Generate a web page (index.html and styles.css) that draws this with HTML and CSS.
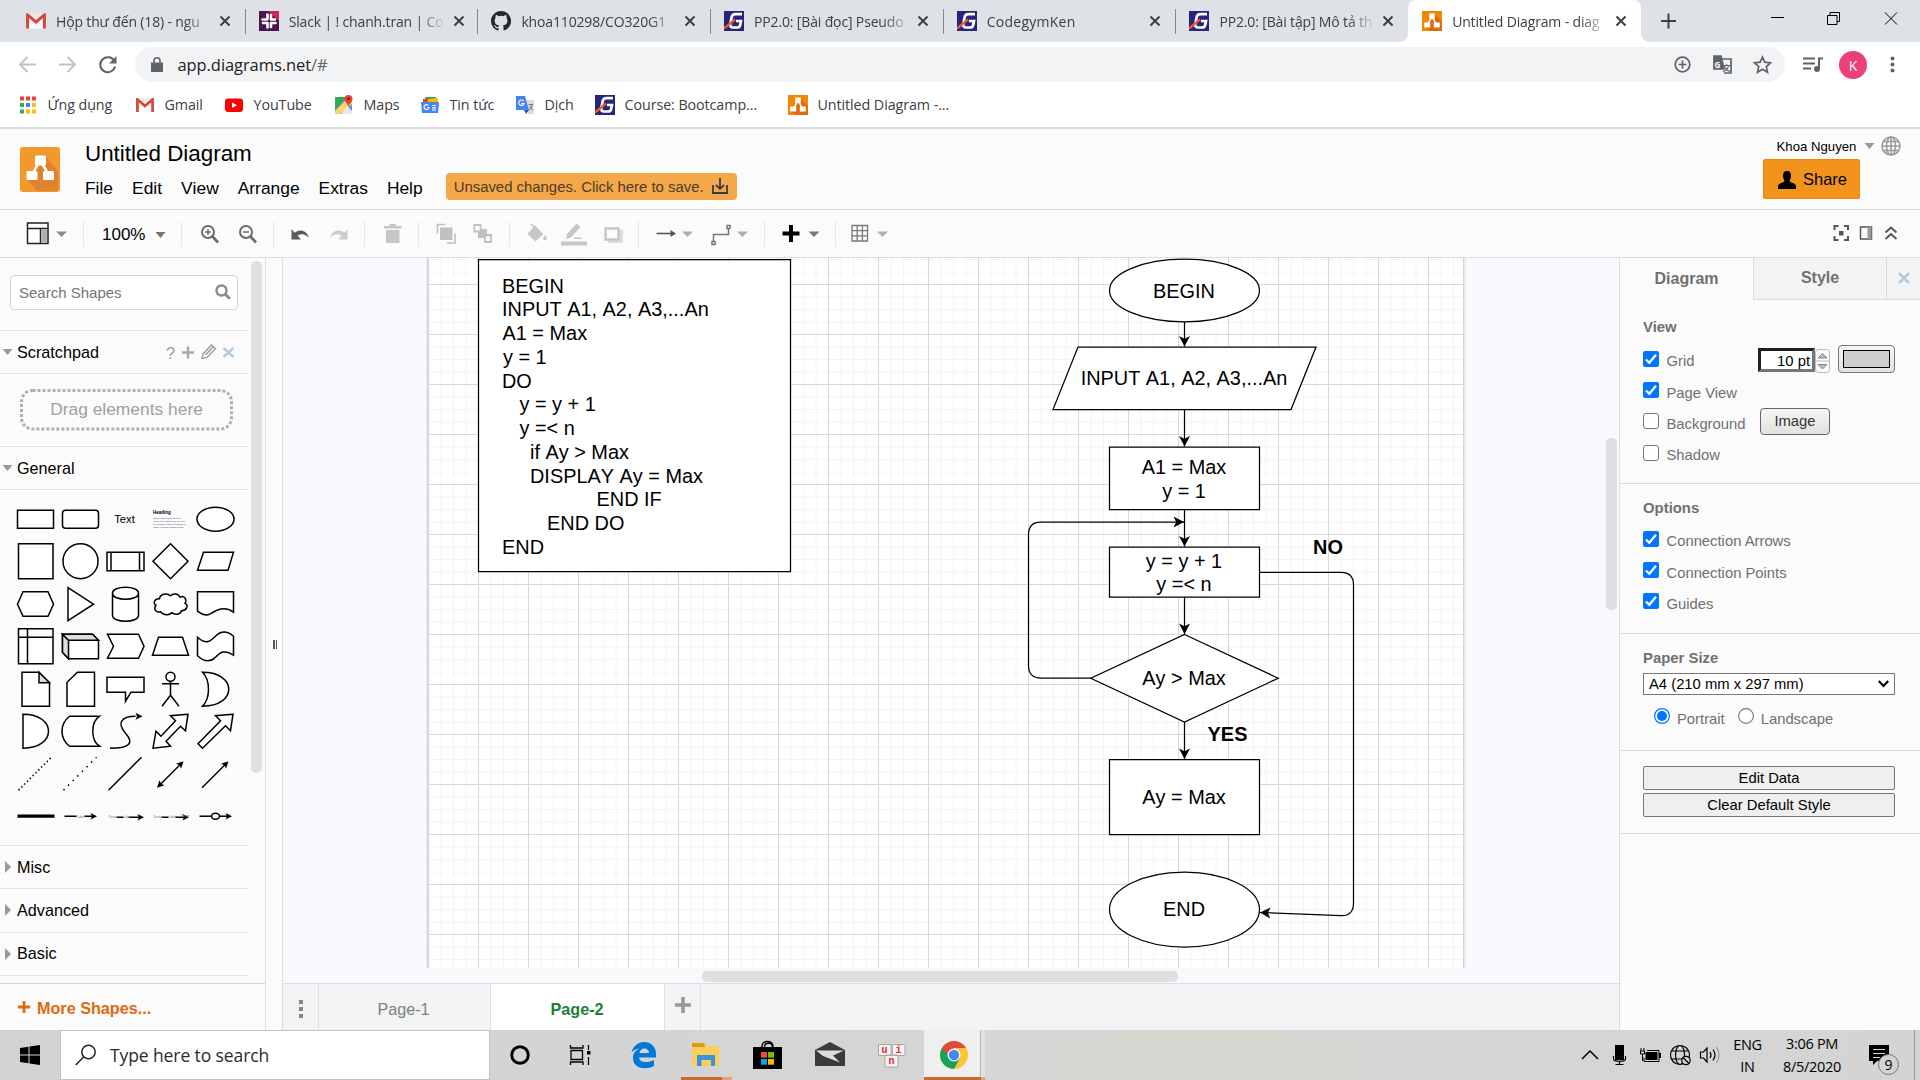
FILE: index.html
```html
<!DOCTYPE html>
<html lang="en">
<head>
<meta charset="utf-8">
<title>Untitled Diagram - diagrams.net</title>
<link rel="stylesheet" href="styles.css">
</head>
<body>
<svg class="defs" width="0" height="0">
  <defs>
    <symbol id="close" viewBox="0 0 12 12"><path d="M1.5 1.5l9 9M10.5 1.5l-9 9" stroke="#3c4043" stroke-width="2" fill="none"/></symbol>
    <symbol id="gmail" viewBox="0 0 18 14"><path d="M1 0h16v14H1z" fill="#eceaea"/><path d="M3 14V3l6 5 6-5v11z" fill="#f8f8f8"/><path d="M1.4 14V1.500L9 8l7.600-6.500V14" fill="none" stroke="#d6473c" stroke-width="2.700"/></symbol>
    <symbol id="gym" viewBox="0 0 20 20"><path d="M0 0h20v20H0z" fill="#25257b"/><path d="M18 3.200H11.500Q8.300 3.200 7.700 6L6.300 13Q5.800 16.500 9 16.500H13Q15.800 16.500 16.200 14L17 10H12" fill="none" stroke="#fff" stroke-width="2.700"/><path d="M0 17.500L11 8.500" stroke="#f1592a" stroke-width="2.300"/></symbol>
    <symbol id="drawio" viewBox="0 0 20 20"><path d="M0 0h20v20H0z" fill="#f08705"/><path d="M12 3l8 8v9H8l-5-4 6-6z" fill="#df6c0c"/><path d="M10 5L5.500 14M10 5l4.500 9" stroke="#fff" stroke-width="1.600"/><path d="M7.200 2.500h5.600v5.500H7.200zM2.200 11.500h6v5h-6zM11.800 11.500h6v5h-6z" fill="#fff"/></symbol>
    <symbol id="caret" viewBox="0 0 10 6"><path d="M0 0h10L5 6z" fill="currentColor"/></symbol>
    <symbol id="check" viewBox="0 0 16 16"><rect width="16" height="16" rx="2" fill="#0075ff"/><path d="M3 8.500l3.300 3.300L13 3.800" fill="none" stroke="#fff" stroke-width="2.300"/></symbol>
    <symbol id="uncheck" viewBox="0 0 16 16"><rect x=".5" y=".5" width="15" height="15" rx="2.500" fill="#fff" stroke="#767676"/></symbol>
  </defs>
</svg>

<div class="tabstrip">
  <div class="tab"><svg class="fav" viewBox="0 0 18 14"><use href="#gmail"/></svg><span class="tab-title">Hộp thư đến (18) - ngu</span><svg class="x"><use href="#close"/></svg></div>
  <div class="tab"><svg class="fav" viewBox="0 0 20 20"><path d="M0 0h20v20H0z" fill="#4a154b"/><path d="M9 0h11v10z" fill="#d0235a"/><g fill="none" stroke="#fff" stroke-width="2.600" stroke-linecap="round"><path d="M8.500 3.500V8M3.500 8.500H8M12 4v4M12 8.500h4M8.500 12v4.500M4 12h4M12 12v4M12 12h4.500"/></g></svg><span class="tab-title">Slack | ! chanh.tran | Co</span><svg class="x"><use href="#close"/></svg></div>
  <div class="tab"><svg class="fav" viewBox="0 0 16 16"><path fill="#24292e" d="M8 0C3.580 0 0 3.580 0 8c0 3.540 2.290 6.530 5.470 7.590.4.070.55-.17.55-.38v-1.490c-2.010.37-2.530-.49-2.690-.94-.09-.23-.48-.94-.82-1.130-.28-.15-.68-.52-.01-.53.63-.01 1.080.58 1.230.82.72 1.210 1.870.87 2.330.66.07-.52.28-.87.51-1.070-1.780-.2-3.640-.89-3.640-3.950 0-.87.31-1.590.82-2.150-.08-.2-.36-1.020.08-2.120 0 0 .67-.21 2.200.82a7.400 7.400 0 014 0c1.530-1.040 2.200-.82 2.200-.82.44 1.100.16 1.920.08 2.120.51.56.82 1.270.82 2.150 0 3.070-1.870 3.750-3.650 3.950.29.25.54.73.54 1.480v2.200c0 .21.15.46.55.38A8 8 0 008 0z"/></svg><span class="tab-title">khoa110298/CO320G1</span><svg class="x"><use href="#close"/></svg></div>
  <div class="tab"><svg class="fav"><use href="#gym"/></svg><span class="tab-title">PP2.0: [Bài đọc] Pseudo</span><svg class="x"><use href="#close"/></svg></div>
  <div class="tab"><svg class="fav"><use href="#gym"/></svg><span class="tab-title wide">CodegymKen</span><svg class="x"><use href="#close"/></svg></div>
  <div class="tab no-sep"><svg class="fav"><use href="#gym"/></svg><span class="tab-title">PP2.0: [Bài tập] Mô tả th</span><svg class="x"><use href="#close"/></svg></div>
  <div class="tab active"><svg class="fav"><use href="#drawio"/></svg><span class="tab-title">Untitled Diagram - diag</span><svg class="x"><use href="#close"/></svg></div>
  <svg class="wincontrols" width="279" height="42" viewBox="1641 0 279 42" fill="none"><path d="M1661 21h15M1668.500 13.500v15" stroke="#3c4043" stroke-width="2"/><path d="M1771 17.500h13" stroke="#000"/><path d="M1827.500 15.500h9.500v9h-9.500zM1830 15.500v-3h9.500v9H1837M1885 12.500l12 12M1897 12.500l-12 12" stroke="#000"/></svg>
</div>

<div class="navbar">
  <svg class="nav-icons" width="135" height="44" viewBox="0 42 135 44" fill="none"><path d="M36 64.500H20M27.500 57l-7.500 7.500 7.500 7.500M59 64.500h16M67.500 57l7.500 7.500-7.500 7.500" stroke="#bdc1c6" stroke-width="1.800"/><path d="M114.500 61.500a7.500 7.500 0 1 0 .5 5" stroke="#5f6368" stroke-width="2"/><path d="M116.500 56v7.500H109z" fill="#5f6368"/></svg>
  <div class="omnibox">
    <svg width="12" height="15" viewBox="0 0 12 15"><path d="M0 5.500h12V15H0z" fill="#5f6368"/><path d="M3 6V3.800a3 3 0 0 1 6 0V6" fill="none" stroke="#5f6368" stroke-width="1.600"/></svg>
    <span class="url">app.diagrams.net<i>/#</i></span>
    <svg width="103" height="30" viewBox="1672 50 103 30" fill="none" stroke="#5f6368" stroke-width="1.700"><circle cx="1682.500" cy="64.500" r="7.300"/><path d="M1678.500 64.500h8M1682.500 60.500v8"/><path d="M1714 56h7l3 13h-10z" fill="#5f6368"/><path d="M1722 59h9v14h-7"/><text x="1714.500" y="67.500" class="tiny" fill="#fff" stroke="none">G</text><text x="1722.500" y="70.500" class="tiny" fill="#5f6368" stroke="none">文</text><path d="M1762.500 57l2.300 5.200 5.700.6-4.200 3.800 1.200 5.600-5-2.900-5 2.900 1.200-5.600-4.200-3.800 5.700-.6z"/></svg>
  </div>
  <svg width="135" height="44" viewBox="1785 42 135 44"><path d="M1803 58.500h12M1803 63.500h12M1803 68.500h8" stroke="#5f6368" stroke-width="2"/><circle cx="1817" cy="69" r="3" fill="#5f6368"/><path d="M1819 69V58.500h4" stroke="#5f6368" stroke-width="2" fill="none"/><circle cx="1853" cy="65" r="14" fill="#ec407a"/><text x="1853" y="70.500" text-anchor="middle" class="avatar">K</text><g fill="#5f6368"><circle cx="1892.500" cy="58.500" r="2"/><circle cx="1892.500" cy="64.500" r="2"/><circle cx="1892.500" cy="70.500" r="2"/></g></svg>
</div>

<div class="bookmarks">
  <a class="bm bm-apps"><svg viewBox="0 0 20 20"><g transform="translate(2 1.500)"><path d="M0 0h4v4H0zM6 0h4v4H6zM12 0h4v4h-4z" fill="#ea4335"/><path d="M0 6.500h4v4H0z" fill="#34a853"/><path d="M6 6.500h4v4H6z" fill="#4285f4"/><path d="M12 6.500h4v4h-4zM6 13h4v4H6zM12 13h4v4h-4z" fill="#fbbc05"/><path d="M0 13h4v4H0z" fill="#34a853"/></g></svg>Ứng dụng</a>
  <a class="bm bm-gmail"><svg viewBox="-1 0 20 14"><use href="#gmail" width="18" height="14"/></svg>Gmail</a>
  <a class="bm bm-yt"><svg viewBox="0 0 20 20"><rect x="1" y="3.500" width="18" height="13.500" rx="3" fill="#f00"/><path d="M8 7.500l5 2.800-5 2.800z" fill="#fff"/></svg>YouTube</a>
  <a class="bm bm-maps"><svg viewBox="0 0 20 20"><path d="M1 2h17v17H1z" fill="#5d93f5"/><path d="M1 2h12L1 15z" fill="#34a853"/><path d="M1 16L14 3l4 3v3L6 19H1z" fill="#fdd663"/><path d="M7 19l6-8 5 5v3z" fill="#e8eaed"/><path d="M14.500 0a4 4 0 0 1 4 4c0 3-3 4-4 8-1-4-4-5-4-8a4 4 0 0 1 4-4z" fill="#ea4335"/><circle cx="14.500" cy="4" r="1.400" fill="#8c2018"/></svg>Maps</a>
  <a class="bm bm-news"><svg viewBox="0 0 20 20"><path d="M5 2h11v5H5z" fill="#34a853"/><path d="M3 4h9v4H3z" fill="#ea4335"/><path d="M8 4l10-1v5H8z" fill="#fbbc05"/><path d="M1 7h18l-1 11H2z" fill="#4285f4"/><path d="M8.500 10.500a2.500 2.500 0 1 0 .5 2H7M12 10.500h4M12 12.800h4M12 15h4" stroke="#fff" stroke-width="1.200" fill="none"/></svg>Tin tức</a>
  <a class="bm bm-dich"><svg viewBox="0 0 20 20"><path d="M9 5h10v14h-6z" fill="#dcdcdc"/><path d="M1 1h9l4 14H1z" fill="#4285f4"/><path d="M9 15h5l-3 4z" fill="#1a56c4"/><path d="M8.500 6a2.700 2.700 0 1 0 .5 2.500H6.500" stroke="#fff" stroke-width="1.200" fill="none"/><path d="M13.500 9.500h4.500M17 10c-.5 3-2 4-3 5M14.500 11l3 4" stroke="#777" fill="none"/></svg>Dịch</a>
  <a class="bm bm-course"><svg><use href="#gym"/></svg>Course: Bootcamp...</a>
  <a class="bm"><svg><use href="#drawio"/></svg>Untitled Diagram -...</a>
</div>

<header class="header">
  <svg class="logo" viewBox="0 0 40 45"><rect width="40" height="45" rx="3" fill="#f2982c"/><path d="M25 9l13 15v17a3 3 0 0 1-3 3H17L7 32l12-14z" fill="#e08330"/><path d="M20 13L12 28M20 13l9 15" stroke="#fff" stroke-width="2.500"/><g fill="#fff"><rect x="15" y="8.500" width="11" height="10" rx="1.500"/><rect x="6.500" y="24" width="11" height="9" rx="1.500"/><rect x="23" y="24" width="11" height="9" rx="1.500"/></g></svg>
  <div class="title-block">
    <div class="doc-title">Untitled Diagram</div>
    <nav class="menus"><a>File</a><a>Edit</a><a>View</a><a>Arrange</a><a>Extras</a><a>Help</a>
      <div class="unsaved"><span>Unsaved changes. Click here to save.</span><svg width="16" height="16" viewBox="0 0 16 16" fill="none" stroke="#3c3c3c" stroke-width="1.800"><path d="M1 7v8h14V7M8 0v11M4 7l4 4 4-4"/></svg></div>
    </nav>
  </div>
  <div class="account">
    <div class="user"><span>Khoa Nguyen</span><svg class="caret" width="11" height="6"><use href="#caret"/></svg><svg width="20" height="20" viewBox="0 0 20 20" fill="none" stroke="#999" stroke-width="1.500"><circle cx="10" cy="10" r="9"/><ellipse cx="10" cy="10" rx="4.500" ry="9"/><path d="M10 1v18M1 10h18M2.500 5.500h15M2.500 14.500h15"/></svg></div>
    <button class="share"><svg width="18" height="18" viewBox="0 0 18 18"><path d="M9 0c3 0 4 2 4 4.500S12 9 11.500 10c0 1.500 6.500 2 6.500 5v3H0v-3c0-3 6.500-3.500 6.500-5C6 9 5 7 5 4.500S6 0 9 0z"/></svg><span>Share</span></button>
  </div>
</header>

<div class="toolbar">
  <svg class="tg" width="84" height="46" viewBox="0 210 84 46"><path d="M27.500 223h20.500v20.500H27.500zM27 228.500h21M40.500 228v15" fill="#fff" stroke="#222" stroke-width="1.500"/><path d="M41.500 229.500h5.500v13h-5.500z" fill="#b0b0b0"/><path d="M56 231.500h11l-5.500 5.500z" fill="#8a8a8a"/></svg>
  <div class="tg zoom"><span>100%</span><svg class="caret" width="11" height="6"><use href="#caret"/></svg></div>
  <svg class="tg" width="92" height="46" viewBox="182 210 92 46" fill="none" stroke="#6b6b6b" stroke-width="2"><circle cx="208" cy="232" r="6"/><path d="M212.500 236.500l5.500 6" stroke-width="2.600"/><path d="M205 232h6M208 229v6" stroke-width="1.500"/><circle cx="246" cy="232" r="6"/><path d="M250.500 236.500l5.500 6" stroke-width="2.600"/><path d="M243 232h6" stroke-width="1.500"/></svg>
  <svg class="tg" width="91" height="46" viewBox="274 210 91 46"><path d="M291.500 229v10.500h9.500l-3.500-3.800c4-2.500 8-1.500 11.500 2-2.500-7.200-9-9-14.300-5z" fill="#5c5c5c"/><path d="M347.500 229v10.500H338l3.500-3.800c-4-2.500-8-1.500-11.500 2 2.500-7.200 9-9 14.300-5z" fill="#ccc"/></svg>
  <svg class="tg" width="54" height="46" viewBox="365 210 54 46" fill="#c6c6c6"><path d="M384 226h5.500v-2h6.500v2h5.500v2.500H384zM386 230h13.500v13H386z"/></svg>
  <svg class="tg" width="91" height="46" viewBox="419 210 91 46"><g fill="#c0c0c0"><path d="M440 227.500h12.500V240H440zM473.500 224h8v8.500h-8zM484 234h8v9h-8z"/><path d="M478 229h9v9h-9z"/></g><path d="M437.500 233.500v-9h8M447 243h8v-9.500" fill="none" stroke="#c0c0c0" stroke-width="1.600"/><path d="M475.300 226h4.500v4.500h-4.500zM485.700 236.500h4.500v4.500h-4.500z" fill="#fbfbfb"/></svg>
  <svg class="tg" width="129" height="46" viewBox="510 210 129 46" fill="#c6c6c6"><path d="M535 225.500l8.500 8.500-8 7.500-8-7.500zM545 235c3 4 2 5 0 5s-3-1 0-5z"/><path d="M531 224l5 5" stroke="#c6c6c6" stroke-width="1.700"/><path d="M561 241.500h26v4h-26zM566 239l1-5 9.500-10.500 4 3.500-9.500 10.500zM574 237.500h8v1.500h-8z"/><path d="M608 230v13h15v-13z" fill="#ddd"/><path d="M605.500 228.500h13v11h-13z" fill="#fbfbfb" stroke="#c6c6c6" stroke-width="2.400"/></svg>
  <svg class="tg" width="126" height="46" viewBox="639 210 126 46"><path d="M656.500 233.500h17" stroke="#555" stroke-width="1.600"/><path d="M670.500 230l5.500 3.500-5.500 3.500z" fill="#555"/><path d="M713.500 241v-6.500h15V229" fill="none" stroke="#777" stroke-width="1.500"/><path d="M712 241.500h3v3h-3zM727 225.500h3v3h-3z" fill="#fff" stroke="#777" stroke-width="1.500"/><path d="M682 231.500h11l-5.500 5.500zM737 231.500h11l-5.500 5.500z" fill="#b0b0b0"/></svg>
  <svg class="tg" width="71" height="46" viewBox="765 210 71 46"><path d="M782.500 233.500h17M791 225v17" stroke="#000" stroke-width="4"/><path d="M808.500 231.500h11l-5.500 5.500z" fill="#777"/></svg>
  <svg class="tg last" width="70" height="46" viewBox="836 210 70 46"><path d="M852 225.500h15.500v15.500H852zM857.200 225.500v15.500M862.400 225.500v15.500M852 230.700h15.500M852 235.900h15.500" fill="none" stroke="#777" stroke-width="1.300"/><path d="M877 231.500h11l-5.500 5.500z" fill="#b0b0b0"/></svg>
  <svg class="view-controls" width="90" height="46" viewBox="1830 210 90 46" fill="none" stroke="#555" stroke-width="2"><path d="M1834.500 230v-4h4M1844 226h4v4M1848 236v4h-4M1838.500 240h-4v-4"/><path d="M1839 231h4.500v4.500h-4.500z" fill="#555" stroke="none"/><path d="M1860.500 227h11v12h-11z" stroke-width="1.500"/><path d="M1867.500 227h4v12h-4z" fill="#999" stroke="none"/><path d="M1885.500 232.500l5.500-5 5.500 5M1885.500 239l5.500-5 5.500 5"/></svg>
</div>

<main class="workspace">
  <aside class="sidebar">
    <div class="side-scroll">
      <div class="side-content">
        <div class="search-wrap"><div class="search"><span>Search Shapes</span><svg width="16" height="16" viewBox="0 0 16 16" fill="none" stroke="#8c8c8c"><circle cx="6.500" cy="6.500" r="5" stroke-width="2.400"/><path d="M10 10l4.800 4.800" stroke-width="3"/></svg></div></div>
        <div class="section open"><svg width="11" height="6"><use href="#caret"/></svg><span>Scratchpad</span>
          <svg class="scratch-tools" width="70" height="18" viewBox="165 343 70 18"><text x="166" y="358.500" class="question">?</text><path d="M182 352.500h12M188 346.500v12" stroke="#aaa" stroke-width="2.500"/><path d="M203 354l8.500-9 4 3.500-8.500 9-5 1zM205.500 355l7.500-8" fill="none" stroke="#999" stroke-width="1.300"/><path d="M223.500 348l10 9M233.500 348l-10 9" stroke="#b6c8dc" stroke-width="2.400"/></svg>
        </div>
        <div class="drop-wrap"><svg width="213" height="42" viewBox="0 0 213 42"><rect x="1.500" y="1.500" width="210" height="38.500" rx="11" fill="none" stroke="#b0b0b0" stroke-width="3" stroke-dasharray="3 2"/><text x="106.500" y="26" text-anchor="middle" class="drop-text">Drag elements here</text></svg></div>
        <div class="section open top"><svg width="11" height="6"><use href="#caret"/></svg><span>General</span></div>
        <div class="palette">
          <svg viewBox="-22.500 -21 45 42"><path d="M-18-9h36V9h-36z"/></svg>
          <svg viewBox="-22.500 -21 45 42"><rect x="-18" y="-9" width="36" height="18" rx="3"/></svg>
          <svg viewBox="-22.500 -21 45 42"><text x="-1" y="4" text-anchor="middle" class="pal-text">Text</text></svg>
          <svg viewBox="-22.500 -21 45 42"><text x="-17.500" y="-5.500" class="pal-head">Heading</text><g class="pal-lorem"><text x="-17.500" y="-.5">Lorem ipsum dolor sit amet,</text><text x="-17.500" y="2.500">consectetur adipisicing elit, sed</text><text x="-17.500" y="5.500">do eiusmod tempor incididunt ut</text><text x="-17.500" y="8.500">labore et dolore magna aliqua</text></g></svg>
          <svg viewBox="-22.500 -21 45 42"><ellipse rx="18.500" ry="12"/></svg>

          <svg viewBox="-22.500 -21 45 42"><path d="M-17-17.500h34.500v35h-34.500z"/></svg>
          <svg viewBox="-22.500 -21 45 42"><circle r="17.500"/></svg>
          <svg viewBox="-22.500 -21 45 42"><path d="M-18.500-9h37V9.500h-37zM-14.500-9V9.500M14-9V9.500"/></svg>
          <svg viewBox="-22.500 -21 45 42"><path d="M0-17.500L17.500 0 0 17.500-17.500 0z"/></svg>
          <svg viewBox="-22.500 -21 45 42"><path d="M-12-9h30L12.500 9h-30.500z"/></svg>

          <svg viewBox="-22.500 -21 45 42"><path d="M-12.500-12.500h25L18 0l-5.500 12h-25L-18 0z"/></svg>
          <svg viewBox="-22.500 -21 45 42"><path d="M-12.500-16.500L13 0l-25.500 16.500z"/></svg>
          <svg viewBox="-22.500 -21 45 42"><path d="M-13-11v22c0 8 26 8 26 0v-22c0-8-26-8-26 0c0 8 26 8 26 0"/></svg>
          <svg viewBox="-22.500 -21 45 42"><path d="M-11-5.500c-5-.5-7 5-3.500 6.500-3 3.500 0 8 4.500 6.500 2 3.500 9 4 11 1 4 3 9.500 1.500 10-2 5 0 7.500-5 3.500-7.500 2.500-4-1-8-5-6-2-4-7-4-9.500-1.500-4-3.500-10.500-1.500-11 3z"/></svg>
          <svg viewBox="-22.500 -21 45 42"><path d="M-18-12.500h36V8C9 1 1 6-6 10c-4 2-8 0-12-3z"/></svg>

          <svg viewBox="-22.500 -21 45 42"><path d="M-17-17.500h34.500v35h-34.500zM-17-9h34.500M-8-17.500v35"/></svg>
          <svg viewBox="-22.500 -21 45 42"><path d="M-18-12h30L18-6v18.500h-30L-18 6z"/><path d="M-18-12l6 6v18.500L-18 6z" class="shade"/><path d="M-18-12h30L18-6h-30z" class="shade"/></svg>
          <svg viewBox="-22.500 -21 45 42"><path d="M-18-12h31L18.500 0 13 12h-31l6-12z"/></svg>
          <svg viewBox="-22.500 -21 45 42"><path d="M-12-9h24l6 18h-36z"/></svg>
          <svg viewBox="-22.500 -21 45 42"><path d="M-18-9C-9-1-5-5 0-10s11-6 18 0V9C9 3 5 6 0 11s-11 5-18-1.500z"/></svg>

          <svg viewBox="-22.500 -21 45 42"><path d="M-13.500-17h17L14-6.500V17h-27.500z"/><path d="M3.500-17v10.500H14z" class="shade"/></svg>
          <svg viewBox="-22.500 -21 45 42"><path d="M-3-17h17V17h-27.500V-7z"/></svg>
          <svg viewBox="-22.500 -21 45 42"><path d="M-18.500-12h37V3H5.500L0 12V3h-18.500z"/></svg>
          <svg viewBox="-22.500 -21 45 42"><circle cy="-12.500" r="4.500"/><path d="M0-8V6M-8.500-5.500h17M0 6l-8.500 11M0 6l8.500 11"/></svg>
          <svg viewBox="-22.500 -21 45 42"><path d="M-13-17c35 0 35 34 0 34 8-8 8-26 0-34z"/></svg>

          <svg viewBox="-22.500 -21 45 42"><path d="M-12.500-17c34 0 34 34 0 34z"/></svg>
          <svg viewBox="-22.500 -21 45 42"><path d="M-11-15h30c-9 6-9 24 0 30h-30c-10-8-10-22 0-30z"/></svg>
          <svg viewBox="-22.500 -21 45 42"><path d="M-15.500 17C4 17 9 12 0 2S-4-15 10-15" fill="none"/><path d="M17-15l-7-3.500 1.500 3.500L10-11.500z" class="solid"/></svg>
          <svg viewBox="-22.500 -21 45 42"><path d="M17.500-17L0-15.500l5 5L-9.500 5l-5-5-3 17L0 15l-4.500-5L10-5l5 4.500z"/></svg>
          <svg viewBox="-22.500 -21 45 42"><path d="M17.500-17L0-15.500l5 5L-17.500 12.500l4.500 4.500L10-5.500l5 5z"/></svg>

          <svg viewBox="-22.500 -21 45 42"><path d="M-17 16L16-17" stroke-dasharray="1.500 2.500"/></svg>
          <svg viewBox="-22.500 -21 45 42"><path d="M-17 16L16-17" stroke-dasharray="1.500 5"/></svg>
          <svg viewBox="-22.500 -21 45 42"><path d="M-17 16L16-17"/></svg>
          <svg viewBox="-22.500 -21 45 42"><path d="M-11 11L11-11"/><path d="M13-13L5.500-10.500 9-9l1.500 3.500zM-13.500 13.500L-11 6l1.500 3.500 3.500 1.500z" class="solid"/></svg>
          <svg viewBox="-22.500 -21 45 42"><path d="M-13.500 13.500L11-11"/><path d="M13-13L5.500-10.500 9-9l1.500 3.500z" class="solid"/></svg>

          <svg viewBox="-22.500 -21 45 42"><path d="M-18 0h37" stroke-width="3.200"/></svg>
          <svg viewBox="-22.500 -21 45 42"><path d="M-16 0h12M4 0h8"/><path d="M16.500 0L10-3.200 11.500 0 10 3.200z" class="solid"/><text x="-3.500" y="1.300" class="pal-label">Label</text></svg>
          <svg viewBox="-22.500 -21 45 42"><path d="M-9 1h7M3 1h12"/><path d="M18.500 1L12-2.200 13.500 1 12 4.200z" class="solid"/><text x="-17" y="1.500" class="pal-label">Source</text><text x="-2" y="1.500" class="pal-label">Label</text></svg>
          <svg viewBox="-22.500 -21 45 42"><path d="M-9 1h7M5 1h10"/><path d="M18.500 1L12-2.200 13.500 1 12 4.200z" class="solid"/><text x="-17" y="1.500" class="pal-label">Source</text><text x="-2" y="1.500" class="pal-label">Label</text><text x="10" y="1" class="pal-label">Target</text></svg>
          <svg viewBox="-22.500 -21 45 42"><path d="M-16 0h28"/><ellipse cx="0" cy="0" rx="4" ry="3"/><path d="M16.500 0L10-3.200 11.500 0 10 3.200z" class="solid"/></svg>
        </div>
        <div class="section closed top"><svg width="6" height="12" viewBox="0 0 6 12"><path d="M0 0l6 6-6 6z" fill="#999"/></svg><span>Misc</span></div>
        <div class="section closed"><svg width="6" height="12" viewBox="0 0 6 12"><path d="M0 0l6 6-6 6z" fill="#999"/></svg><span>Advanced</span></div>
        <div class="section closed"><svg width="6" height="12" viewBox="0 0 6 12"><path d="M0 0l6 6-6 6z" fill="#999"/></svg><span>Basic</span></div>
      </div>
      <div class="side-bar"></div>
    </div>
    <div class="more-shapes"><svg width="12" height="12" viewBox="0 0 12 12"><path d="M0 6h12M6 0v12" stroke="#dd6b10" stroke-width="2.800"/></svg>More Shapes...</div>
  </aside>
  <div class="splitter"><i></i><i></i></div>

  <section class="center">
    <div class="canvas-row">
      <svg class="canvas" width="1336" height="710" viewBox="283 258 1336 710">
        <defs>
          <pattern id="grid" x="428" y="284" width="50" height="50" patternUnits="userSpaceOnUse"><path d="M13 0v50M25.500 0v50M38 0v50M0 13h50M0 25.500h50M0 38h50" stroke="#f4f4f4" fill="none"/><path d="M.5 0v50M0 .5h50" stroke="#d8d8d8" fill="none"/></pattern>
          <marker id="arrow" viewBox="-11 -6 12 12" refX="0" refY="0" markerWidth="12" markerHeight="12" markerUnits="userSpaceOnUse" orient="auto"><path d="M0 0l-10.500-5.500 2.700 5.500-2.700 5.500z"/></marker>
        </defs>
        <path d="M426 258h1040v710H426z" fill="#ececef"/>
        <path d="M428 258h1036v710H428z" fill="#fff"/>
        <path d="M428 258h1036v710H428z" fill="url(#grid)"/>
        <path d="M1463.500 258v710M427.500 258v710" stroke="#d5d5d8"/>
        <g class="shape">
          <path d="M478.500 259.500h312v312h-312z"/>
          <ellipse cx="1184.500" cy="290.500" rx="75" ry="31.300"/>
          <path d="M1078 347h238l-25 62.500h-238z"/>
          <path d="M1109.500 447h150v62.500h-150z"/>
          <path d="M1109.500 547h150v50h-150z"/>
          <path d="M1184.500 634.500l93.700 43.700-93.700 43.800-93.700-43.800z"/>
          <path d="M1109.500 759.500h150v75h-150z"/>
          <ellipse cx="1184.500" cy="909.500" rx="75" ry="37.500"/>
        </g>
        <g class="edge">
          <path d="M1184.500 322v24.500"/><path d="M1184.500 409.500v37"/><path d="M1184.500 509.500v37"/><path d="M1184.500 597v37"/><path d="M1184.500 722v37"/>
          <path d="M1091 678h-50q-12.500 0-12.500-12.500V534.500q0-12.500 12.500-12.500h143"/>
          <path d="M1259.500 572.300h81.500q12.500 0 12.500 12.500v318.200q0 13-12.500 12.700l-81-3.200"/>
        </g>
        <g class="code">
          <text x="502" y="292.500">BEGIN</text><text x="502" y="316">INPUT A1, A2, A3,...An</text><text x="502.500" y="340">A1 = Max</text><text x="503" y="364">y = 1</text><text x="502" y="387.500">DO</text><text x="519.500" y="411">y = y + 1</text><text x="519.500" y="435">y =&lt; n</text><text x="530" y="459">if Ay &gt; Max</text><text x="530" y="483">DISPLAY Ay = Max</text><text x="596.500" y="505.500">END IF</text><text x="547" y="529.500">END DO</text><text x="502" y="553.500">END</text>
        </g>
        <g class="code mid">
          <text x="1184" y="297.500">BEGIN</text><text x="1184" y="385">INPUT A1, A2, A3,...An</text><text x="1184" y="473.500">A1 = Max</text><text x="1184" y="497.500">y = 1</text><text x="1184" y="568">y = y + 1</text><text x="1184" y="591">y =&lt; n</text><text x="1184" y="685">Ay &gt; Max</text><text x="1184" y="804">Ay = Max</text><text x="1184" y="916">END</text>
          <text x="1328" y="553.500" class="bold">NO</text><text x="1227.500" y="740.500" class="bold">YES</text>
        </g>
        <rect x="1606" y="438" width="11" height="172" rx="5" fill="#dedfe1"/>
      </svg>
      <div class="hscroll"><div></div></div>
    </div>
    <div class="pages">
      <div class="page-menu"><i></i><i></i><i></i></div>
      <div class="page">Page-1</div>
      <div class="page current">Page-2</div>
      <div class="page-add"><svg width="16" height="16" viewBox="0 0 16 16"><path d="M0 8h16M8 0v16" stroke="#999" stroke-width="3.600"/></svg></div>
    </div>
  </section>

  <aside class="format">
    <div class="ftabs"><div class="ftab on">Diagram</div><div class="ftab">Style</div><div class="ftab fx"><svg width="12" height="12" viewBox="0 0 12 12"><path d="M1 1l10 10M11 1L1 11" stroke="#b6c8dc" stroke-width="2.600"/></svg></div></div>
    <div class="panel view">
      <h3>View</h3>
      <div class="opt"><svg><use href="#check"/></svg><span class="w-grid">Grid</span>
        <div class="grid-size">10 pt</div>
        <svg class="stepper" viewBox="0 0 15 24"><rect x=".5" y=".5" width="14" height="23" rx="3" fill="#fbfbfb" stroke="#bbb"/><path d="M0 12h15" stroke="#bbb"/><path d="M3 9l4.500-4.500L12 9zM3 15.500l4.500 4.500 4.500-4.500z" fill="#bbb" stroke="#888"/></svg>
        <div class="color-btn"><i></i></div>
      </div>
      <div class="opt"><svg><use href="#check"/></svg><span>Page View</span></div>
      <div class="opt"><svg><use href="#uncheck"/></svg><span class="w-bg">Background</span><div class="image-btn">Image</div></div>
      <div class="opt"><svg><use href="#uncheck"/></svg><span>Shadow</span></div>
    </div>
    <div class="panel options">
      <h3>Options</h3>
      <div class="opt"><svg><use href="#check"/></svg><span>Connection Arrows</span></div>
      <div class="opt"><svg><use href="#check"/></svg><span>Connection Points</span></div>
      <div class="opt"><svg><use href="#check"/></svg><span>Guides</span></div>
    </div>
    <div class="panel paper">
      <h3>Paper Size</h3>
      <div class="select"><span>A4 (210 mm x 297 mm)</span><svg width="11" height="8" viewBox="0 0 11 8"><path d="M.8 1l4.700 5 4.700-5" fill="none" stroke="#000" stroke-width="2.200"/></svg></div>
      <div class="radios"><svg viewBox="0 0 16 16"><circle cx="8" cy="8" r="7.400" fill="#fff" stroke="#0075ff" stroke-width="1.200"/><circle cx="8" cy="8" r="5" fill="#0075ff"/></svg><span>Portrait</span><svg class="second" viewBox="0 0 16 16"><circle cx="8" cy="8" r="7.400" fill="#fff" stroke="#767676" stroke-width="1.100"/></svg><span>Landscape</span></div>
    </div>
    <div class="panel actions"><div class="act">Edit Data</div><div class="act">Clear Default Style</div></div>
  </aside>
</main>

<footer class="taskbar">
  <svg width="60" height="50" viewBox="0 1030 60 50"><path d="M20 1048l8.500-1.200v7.700H20zM29.500 1046.600L40 1045v9.500H29.500zM20 1055.500h8.500v7.700L20 1062zM29.500 1055.500H40v9.500l-10.500-1.500z"/></svg>
  <div class="win-search"><svg width="22" height="22" viewBox="0 0 22 22" fill="none" stroke="#222" stroke-width="1.500"><circle cx="13.500" cy="8" r="6.700"/><path d="M8.800 12.800L.8 21"/></svg>Type here to search</div>
  <svg class="apps" width="500" height="50" viewBox="490 1030 500 50">
    <path d="M924 1030h61v50h-61z" fill="#efefef"/><path d="M981 1030h4v50h-4z" fill="#e2e2e2"/><path d="M980.500 1030v50" stroke="#b8b8b8"/>
    <circle cx="520" cy="1055" r="8.300" fill="none" stroke="#000" stroke-width="2.900"/>
    <path d="M571 1050.500h11.500v9H571zM570.500 1045v3h12.500v-3M570.500 1065v-3h12.500v3M588.500 1045v5M588.500 1057v8" fill="none" stroke="#000" stroke-width="1.300"/><path d="M587 1051h3.500v3.500H587z"/>
    <path d="M631.500 1053C633 1046 638 1042 644 1042c8 0 12 6 12 12v3.500h-17c.5 5 8 6 15 2.500v6c-9 4.500-21 2.500-21-8 0-5 3-8 6.500-9.500-4 .3-6.500 2-8 4.500zM639.500 1053h9.500c0-6-9-6-9.500 0z" fill="#0078d7"/>
    <path d="M692 1043h12l2 3h13v20h-27z" fill="#fcce5a"/><path d="M692 1043h12l1 4h-13z" fill="#dd9a10"/><path d="M697 1066v-11h18v11h-4v-6h-9.500v6z" fill="#3a93dc"/><path d="M681 1077h41v3h-41z" fill="#cb6a2b"/><path d="M722 1077h10v3h-10z" fill="#dfa27c"/>
    <path d="M753 1047h29v22h-29z"/><path d="M762 1048v-2c0-6 11-6 11 0v2M764.500 1047c0-5 8-5 8 0" fill="none" stroke="#000" stroke-width="1.400"/><path d="M761 1052h6v5.700h-6z" fill="#f25022"/><path d="M768 1052h6v5.700h-6z" fill="#7fba00"/><path d="M761 1059h6v5.700h-6z" fill="#00a4ef"/><path d="M768 1059h6v5.700h-6z" fill="#ffb900"/>
    <path d="M815 1050l15-8 15 8v16h-30z" fill="#3a3a3a"/><path d="M816 1050.500h28l-11 5 7 7-17-6.500z" fill="#dcdcdc"/>
    <g fill="#f3f3f3" stroke="#a8a8a8"><path d="M878.500 1044.500h12.500v11h-12.500zM892.500 1044.500H905v11h-12.500zM885 1055h13v12h-13z"/></g><g class="keycaps"><text x="884.500" y="1053">u</text><text x="898.500" y="1053">i</text><text x="891.500" y="1063.500">n</text></g>
    <g transform="translate(954 1055)"><circle r="14" fill="#fbc62f"/><path d="M-12.100-7A14 14 0 0 1 12.100-7H0L-5 4z" fill="#dd4b3e"/><path d="M-12.100-7A14 14 0 0 0 0 14L6 3l-8 2z" fill="#1aa15f"/><circle r="6.500" fill="#fff"/><circle r="5.200" fill="#4587f3"/></g>
    <path d="M924 1077h57v3h-57z" fill="#cb6a2b"/><path d="M981 1077h4v3h-4z" fill="#dfa27c"/>
  </svg>
  <svg class="tray" width="350" height="50" viewBox="1570 1030 350 50">
    <path d="M1582 1059l8-8 8 8" fill="none" stroke="#000" stroke-width="1.500"/>
    <path d="M1615 1045h9v15h-9z"/><path d="M1613.500 1056v3c0 3 12 3 12 0v-3M1619.500 1061v3.500M1615.500 1064.500h8" fill="none" stroke="#000" stroke-width="1.200"/>
    <path d="M1645.500 1052h12v8h-12zM1659 1053h2v5h-2z"/><path d="M1647 1050.500h12v11h-15v-4M1640.500 1051h4v3h-4zM1642.500 1054v7M1641 1048v3M1644 1048v3" fill="none" stroke="#000"/>
    <g fill="none" stroke="#000" stroke-width="1.200"><circle cx="1680" cy="1055" r="9.500"/><ellipse cx="1680" cy="1055" rx="4.500" ry="9.500"/><path d="M1671.500 1051h17M1671.500 1059h17"/><circle cx="1686" cy="1060.500" r="4.200" fill="#d4d4d4"/><path d="M1683 1057.500l6 6"/></g>
    <path d="M1700.500 1052h3l3.500-4v14l-3.500-4h-3zM1710 1052q2 3 0 6M1713 1049.500q4 5.500 0 11" fill="none" stroke="#000" stroke-width="1.200"/><path d="M1716.500 1047q5 8 0 16" fill="none" stroke="#999" stroke-width="1.200"/>
    <g class="tray-text"><text x="1747.500" y="1050">ENG</text><text x="1747.500" y="1072">IN</text><text x="1812" y="1049">3:06 PM</text><text x="1812" y="1071.500">8/5/2020</text></g>
    <path d="M1869 1045h20v16h-12l-4 4v-4h-4z"/><path d="M1873 1049.500h12M1873 1053.500h12M1873 1057.500h7" stroke="#d4d4d4" stroke-width="1.200"/><circle cx="1888.500" cy="1064.500" r="10" fill="#d4d4d4" stroke="#777"/><text x="1888.500" y="1069.500" class="badge">9</text>
    <path d="M1914.500 1030v50" stroke="#999"/>
  </svg>
</footer>
</body>
</html>
```
FILE: styles.css
```css
* { box-sizing: border-box; }
body { margin: 0; width: 1920px; height: 1080px; overflow: hidden; display: flex; flex-direction: column; font-family: "Liberation Sans", Arial, sans-serif; background: #fbfbfb; color: #000; }
svg { display: block; flex: none; }
.defs { position: absolute; }

/* browser chrome */
.tabstrip, .navbar, .bookmarks, .taskbar { font-family: "Open Sans", "Noto Sans CJK SC", sans-serif; }
.tabstrip { height: 42px; flex: none; display: flex; background: #dee1e6; padding-left: 12px; color: #3c4043; font-size: 14px; }
.tab { width: 232.700px; flex: none; display: flex; align-items: center; padding: 0 14px; position: relative; }
.tab:not(.active):not(.no-sep)::after { content: ""; position: absolute; right: -1px; top: 9px; width: 1px; height: 25px; background: #85888d; }
.tab.active { background: #fff; border-radius: 8px 8px 0 0; }
.tab.active::before, .tab.active::after { content: ""; position: absolute; bottom: 0; width: 8px; height: 8px; }
.tab.active::before { left: -8px; background: radial-gradient(circle at 0 0, transparent 7.500px, #fff 8px); }
.tab.active::after { right: -8px; background: radial-gradient(circle at 100% 0, transparent 7.500px, #fff 8px); }
.fav { width: 20px; height: 20px; }
.tab-title { margin-left: 10px; width: 155px; white-space: nowrap; letter-spacing: -.15px; -webkit-mask-image: linear-gradient(90deg, #000 128px, transparent 158px); mask-image: linear-gradient(90deg, #000 128px, transparent 158px); }
.tab-title.wide { letter-spacing: .25px; }
.x { width: 12px; height: 12px; margin-left: 9px; }
.navbar { height: 44px; flex: none; display: flex; background: #fff; align-items: center; }
.omnibox { flex: 1; height: 35px; margin-top: 1px; border-radius: 18px; background: #f1f3f4; display: flex; align-items: center; padding: 0 10px 0 16px; }
.url { flex: 1; margin-left: 14.500px; font-size: 16.500px; letter-spacing: -.08px; color: #202124; }
.url i { font-style: normal; color: #5f6368; }
.tiny { font-size: 8px; font-weight: 700; }
.avatar { font-size: 14px; fill: #fff; }
.bookmarks { height: 43px; flex: none; display: flex; align-items: center; background: #fff; border-bottom: 2px solid #dadce0; padding: 0 0 4px 18px; font-size: 14.300px; letter-spacing: -.08px; color: #3c4043; }
.bm { display: flex; align-items: center; gap: 9.500px; white-space: nowrap; }
.bm svg { width: 20px; height: 20px; }
.bm-apps { width: 117px; } .bm-gmail { width: 89px; } .bm-yt { width: 110px; } .bm-maps { width: 86px; }
.bm-news { width: 95px; } .bm-dich { width: 80px; } .bm-course { width: 193px; }

/* application header */
.header { height: 81px; flex: none; display: flex; border-bottom: 1px solid #dadce0; padding-left: 20px; }
.logo { width: 40px; height: 45px; margin-top: 18px; }
.title-block { margin-left: 25px; padding-top: 11px; flex: 1; }
.doc-title { font-size: 22.400px; line-height: 27px; font-kerning: none; }
.menus { display: flex; align-items: center; gap: 19px; font-size: 17.400px; height: 30px; margin-top: 6px; }
.menus a { padding-top: 1px; font-kerning: none; }
.unsaved { display: flex; align-items: center; gap: 8px; margin: -3px 0 0 4px; width: 291px; height: 27px; padding: 0 8px; border-radius: 4px; background: #f4a84a; color: #4c3c28; font-size: 14.900px; white-space: nowrap; }
.unsaved svg { margin-bottom: 2px; }
.account { width: 157px; padding-top: 7px; }
.user { display: flex; align-items: center; height: 20px; font-size: 13.200px; padding-left: 13.500px; white-space: nowrap; }
.user .caret { color: #999; margin: 0 6px 0 7.500px; }
.share { display: flex; align-items: center; gap: 7px; width: 97px; height: 40px; margin-top: 3px; padding: 1px 0 0 14px; border: 1px solid #f08705; border-radius: 2px; background: #f2931e; font: 16.500px "Liberation Sans", sans-serif; }
.toolbar { height: 48px; flex: none; display: flex; border-bottom: 1px solid #dadce0; background: #fbfbfb; }
.tg { background: linear-gradient(#e5e5e5, #e5e5e5) no-repeat right 12px / 1px 25px; }
.tg.last { background: none; }
.zoom { width: 98px; display: flex; align-items: center; padding: 2px 0 0 18px; font-size: 17px; background-position-x: 97px; }
.zoom .caret { margin-left: 10px; color: #777; }
.view-controls { margin-left: auto; }

/* shape sidebar */
.workspace { flex: 1; display: flex; min-height: 0; }
.sidebar { width: 266px; display: flex; flex-direction: column; border-right: 1px solid #e0e0e0; }
.side-scroll { height: 725px; display: flex; overflow: hidden; }
.side-content { width: 248px; }
.search-wrap { height: 73px; border-bottom: 1px solid #e5e5e5; padding: 17px 10px; }
.search { width: 228px; height: 35px; border: 1px solid #d5d5d5; border-radius: 4px; background: #fff; display: flex; justify-content: space-between; align-items: center; padding: 0 6px 0 8px; font-size: 15px; color: #757575; }
.search svg { margin-bottom: 2px; }
.section { height: 43.500px; display: flex; align-items: center; font-size: 16.200px; border-bottom: 1px solid #e5e5e5; padding-left: 2px; }
.section.open { height: 43px; color: #000; }
.section > svg:first-child { color: #999; margin-right: 4px; }
.section.closed > svg:first-child { margin: 0 6px 0 3px; }
.section.top { border-top: 1px solid #e5e5e5; height: 44px; }
.scratch-tools { margin-left: auto; margin-right: 13px; }
.question { font-size: 16px; fill: #999; }
.drop-wrap { height: 72px; padding: 15px 0 0 20px; }
.drop-text { font-size: 17.400px; fill: #a0a0a0; }
.palette { height: 355px; padding: 8px 0 0 12.500px; display: grid; grid-template-columns: repeat(5, 45px); grid-auto-rows: 42.430px; }
.palette svg { width: 45px; height: 42.430px; fill: #fff; stroke: #000; stroke-width: 1.500; }
.palette text { stroke: none; fill: #000; }
.palette .solid { fill: #000; stroke: none; }
.palette .shade { fill: #ddd; }
.pal-text { font-size: 11.200px; }
.palette .pal-head { font-size: 4.500px; font-weight: 700; }
.pal-lorem text { font-size: 2.300px; fill: #446; }
.palette .pal-label { font-size: 3.200px; fill: #777; }
.side-bar { width: 11px; height: 512px; margin: 3px 0 0 3px; border-radius: 5px; background: #e0e0e0; }
.more-shapes { flex: 1; border-top: 1px solid #d5d5d5; display: flex; align-items: center; gap: 7px; padding: 3px 0 0 18px; font-size: 16.200px; font-weight: 700; color: #dd6b10; }
.more-shapes svg { margin-bottom: 4px; }
.splitter { width: 17px; border-right: 1px solid #dadce0; display: flex; justify-content: center; align-items: center; gap: 1px; padding-left: 2px; }
.splitter i { width: 1.500px; height: 9px; background: #555; }

/* canvas */
.center { width: 1336px; display: flex; flex-direction: column; background: #f8f9fc; }
.canvas-row { height: 725px; }
.shape { fill: #fff; stroke: #000; stroke-width: 1.250; }
.edge path { fill: none; stroke: #000; stroke-width: 1.250; marker-end: url(#arrow); }
.code { font-size: 19.900px; font-kerning: none; }
.mid { text-anchor: middle; }
.bold { font-weight: 700; }
.hscroll { height: 15px; padding: 3px 0 0 419px; }
.hscroll div { width: 476px; height: 11px; border-radius: 5px; background: #dedfe1; }
.pages { flex: 1; display: flex; background: #f1f3f4; border-top: 1px solid #dadce0; font-size: 16.200px; color: #808080; }
.pages > div { display: flex; align-items: center; justify-content: center; border-right: 1px solid #e0e0e0; }
.page-menu { width: 36px; flex-direction: column; gap: 3px; padding-top: 3px; }
.page-menu i { width: 4px; height: 4px; background: #888; }
.pages > .page { width: 172px; padding: 4px 2px 0 0; }
.pages > .page.current { width: 174px; background: #fff; color: #188038; font-weight: 700; padding-right: 1px; }
.page-add { width: 36px; padding-bottom: 4px; }

/* format panel */
.format { flex: 1; border-left: 1px solid #dadce0; color: #707070; font-size: 14.800px; }
.ftabs { display: flex; height: 42px; font-size: 16px; font-weight: 700; }
.ftab { width: 133px; display: flex; align-items: center; justify-content: center; padding-bottom: 2px; background: #f1f3f4; border-left: 1px solid #dadce0; border-bottom: 1px solid #dadce0; }
.ftab.on { background: none; border: 0; padding: 0; }
.ftab.fx { width: 34px; }
.panel { border-bottom: 1px solid #dadce0; padding: 0 0 0 23px; }
.panel h3 { margin: 0; font-size: 14.900px; line-height: 18px; }
.opt { display: flex; height: 31.300px; align-items: center; }
.opt > svg:first-child { width: 16px; height: 16px; margin-right: 7.500px; }
.opt > span { padding-top: 5.500px; white-space: nowrap; }
.view { height: 184px; padding-top: 18px; }
.view h3 { margin-bottom: 7px; }
.w-grid { width: 91.500px; }
.grid-size { width: 57px; height: 24px; margin-top: 3px; background: #fff; color: #000; border: 3px solid; border-color: #1f1f1f #767676 #767676 #1f1f1f; text-align: right; padding: 2px 2px 0; line-height: 17px; }
.stepper { width: 15px; height: 24px; margin-top: 5px; }
.color-btn { width: 57px; height: 28px; margin-left: 8px; border: 1px solid #777; border-radius: 4px; background: linear-gradient(#f7f7f7, #e2e2e2); padding: 4px; }
.color-btn i { display: block; height: 18px; border: 1px solid #000; background: #cfcfcf; }
.w-bg { width: 93.500px; }
.image-btn { width: 70px; height: 27px; border: 1px solid #666; border-radius: 4px; background: linear-gradient(#f5f5f5, #e1e1e1); color: #333; text-align: center; line-height: 24px; }
.options { height: 150px; padding-top: 15px; }
.options h3 { margin-bottom: 6px; }
.paper { height: 117px; padding-top: 15px; }
.select { width: 252px; height: 22px; margin-top: 6px; border: 1px solid #767676; background: #fff; color: #000; display: flex; align-items: center; justify-content: space-between; padding: 0 5px; }
.radios { display: flex; align-items: flex-start; padding: 13px 0 0 11px; }
.radios svg { width: 16px; height: 16px; margin-right: 7px; }
.radios .second { margin-left: 13px; }
.radios span { padding-top: 3px; }
.actions { height: 83px; padding-top: 15px; }
.act { width: 252px; height: 24px; margin-bottom: 3px; border: 1px solid #767676; border-radius: 2px; background: #efefef; color: #000; text-align: center; line-height: 23px; }

/* system taskbar */
.taskbar { height: 50px; flex: none; display: flex; background: linear-gradient(90deg, #d2d2d2, #d5d5d5 50%, #d5d8d0 62%, #d5d5d4 75%, #d4d4d4); }
.win-search { width: 430px; height: 50px; border: 1px solid #c4c4c4; background: #fff; display: flex; align-items: center; gap: 13px; padding-left: 14px; font-size: 17.500px; letter-spacing: -.1px; color: #2b2b2b; }
.tray { margin-left: auto; }
.keycaps { font: 700 10px "Liberation Mono", monospace; fill: #e8262c; text-anchor: middle; }
.tray-text { font-size: 14.500px; text-anchor: middle; letter-spacing: -.3px; }
.badge { font-size: 14px; text-anchor: middle; }
```
